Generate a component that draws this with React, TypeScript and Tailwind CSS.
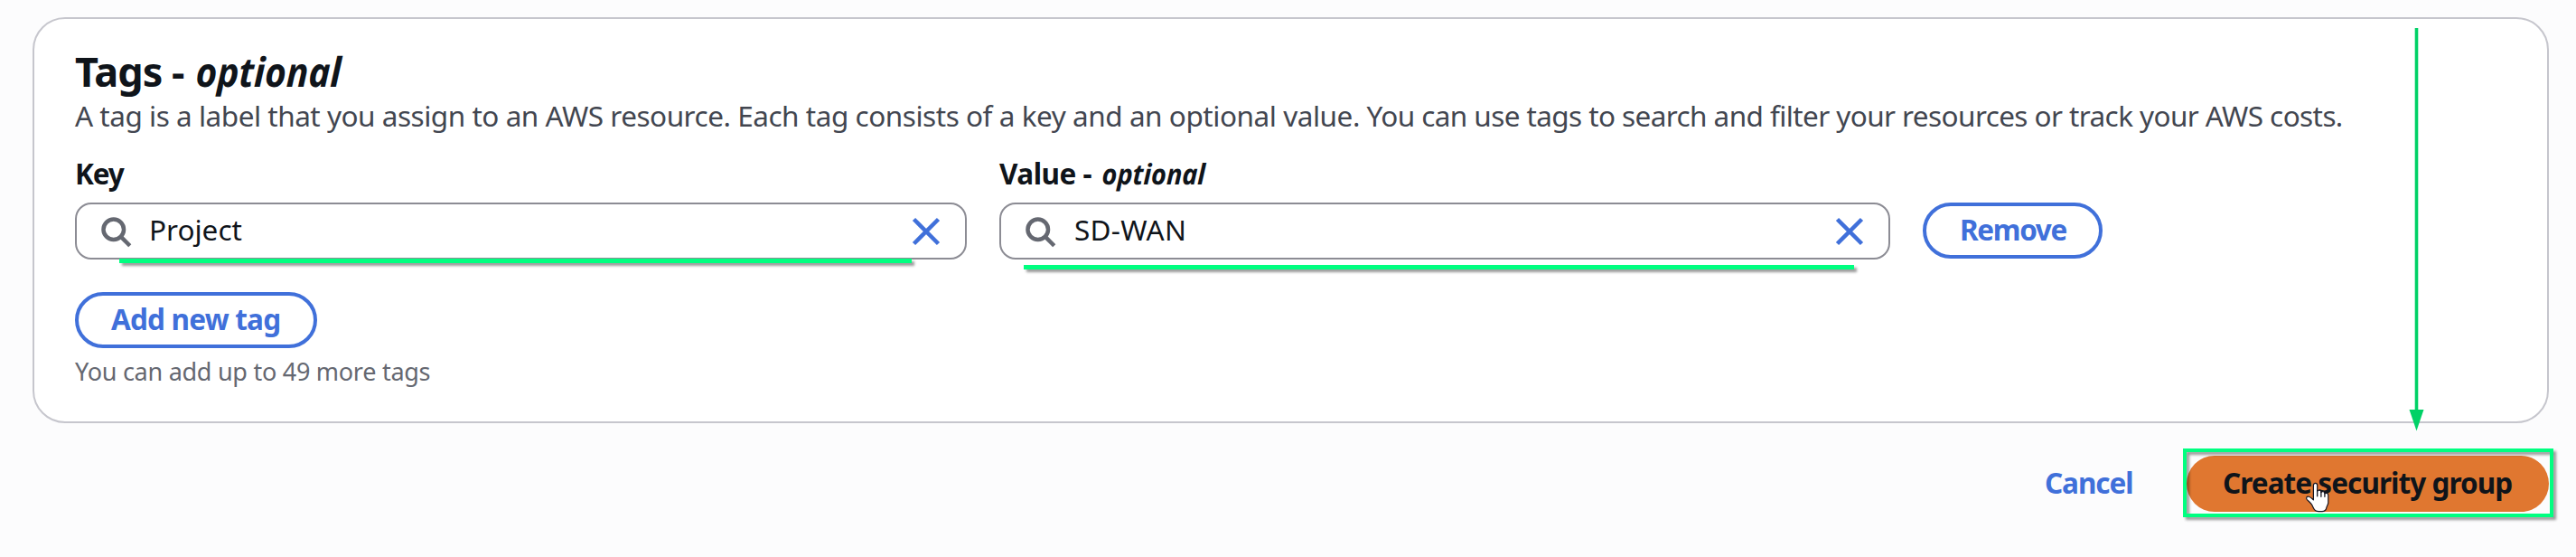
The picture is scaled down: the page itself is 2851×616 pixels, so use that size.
import type { ReactNode } from "react";

function SearchIcon() {
  return (
    <svg viewBox="0 0 16 16" className="h-9 w-9 shrink-0 overflow-visible" fill="none" stroke="#656871" strokeWidth="2">
      <circle cx="7" cy="7" r="5" />
      <path d="m15 15-4.5-4.5" />
    </svg>
  );
}

function CloseIcon() {
  return (
    <svg viewBox="0 0 16 16" className="h-9 w-9 shrink-0 overflow-visible" fill="none" stroke="#4070da" strokeWidth="2">
      <path d="m2 2 12 12M14 2 2 14" />
    </svg>
  );
}

function HandCursor() {
  return (
    <svg viewBox="0 0 44 46" className="absolute left-[2542px] top-[526px] h-[46px] w-[44px]">
      <path
        d="M18.4 10.6c0-3 4.3-3 4.3 0v6.6c.5-1.6 3.9-1.5 4.2.5v.9c.6-1.5 3.6-1.3 4 .6v.8c.8-1.2 3.9-.9 3.9 1.5v8.6c0 2-1.6 3.3-1.9 5.2-.5 2.6-2.3 4.3-5 4.3h-3.7c-2.6 0-4.6-1.3-5.7-3.6l-1.8-3.7c-1-2-3.3-3.7-5.3-5.7-1.9-2-.1-4.3 2.1-3.3 1.9.8 3.3 2.1 4.9 3.5z"
        fill="#fff"
        stroke="#141420"
        strokeWidth="1.2"
        strokeLinejoin="round"
      />
      <path d="M22.7 16.5v6.3M26.9 17.7v5.6M30.9 19v4.3" fill="none" stroke="#141420" strokeWidth="1.3" strokeLinecap="round" />
    </svg>
  );
}

function TagInput({ children }: { children: ReactNode }) {
  return (
    <div className="flex h-[63px] w-full items-center rounded-[18px] border-2 border-[#8c8c94] bg-white pl-[25px] pr-[25px]">
      <SearchIcon />
      <div className="ml-[19px] flex-1 pb-1 text-[31.5px] leading-[45px] text-[#0f141a]">{children}</div>
      <CloseIcon />
    </div>
  );
}

export default function App() {
  return (
    <div className="relative h-[616px] w-[2851px] overflow-hidden bg-[#fcfcfd] pt-[19px] font-['Noto_Sans',sans-serif] text-[#0f141a]">
      <section className="ml-[36px] h-[449px] w-[2785px] rounded-[36px] border-2 border-[#c6c6cd] bg-white pl-[45px] pt-[31px]">
        <h2 className="flex h-[53px] text-[45px] font-bold leading-[54px]">
          <span className="w-[133px] whitespace-nowrap tracking-[-1px]">Tags -</span>
          <em className="origin-bottom-left -skew-x-2 scale-x-[0.9]">optional</em>
        </h2>
        <p className="h-[45px] whitespace-nowrap text-[31.5px] leading-[45px] text-[#424650]">
          <span className="tracking-[-0.48px]">A tag is a label that you assign to an AWS resource. </span>
          <span className="tracking-[-0.46px]">Each tag consists of a key and an optional value. </span>
          <span className="tracking-[-0.59px]">You can use tags to search and filter your resources or track your AWS costs.</span>
        </p>

        <div className="mt-[19px] flex items-end">
          <div className="w-[987px]">
            <div className="mb-[10px] h-[45px] text-[31.5px] font-bold leading-[45px] tracking-[-1.2px]">Key</div>
            <TagInput>Project</TagInput>
          </div>
          <div className="ml-9 w-[986px]">
            <div className="mb-[10px] flex h-[45px] text-[31.5px] font-bold leading-[45px]">
              <span className="w-[113px] whitespace-nowrap tracking-[-0.5px]">Value -</span>
              <em className="origin-bottom-left -skew-x-2 scale-x-[0.915]">optional</em>
            </div>
            <TagInput>
              <span className="pl-px tracking-[0.28px]">SD-WAN</span>
            </TagInput>
          </div>
          <button className="mb-px ml-9 flex h-[62px] w-[199px] items-center rounded-full border-4 border-[#4070da] pb-1 pl-[37px] text-[31.5px] font-bold leading-[45px] tracking-[-1.35px] text-[#4070da]">
            Remove
          </button>
        </div>

        <button className="mt-9 flex h-[62px] w-[268px] items-center whitespace-nowrap rounded-full border-4 border-[#4070da] pb-1 pl-9 text-[31.5px] font-bold leading-[45px] tracking-[-0.8px] text-[#4070da]">
          Add new tag
        </button>
        <p className="mt-2 text-[27px] leading-[36px] tracking-[-0.27px] text-[#656871]">You can add up to 49 more tags</p>
      </section>

      <footer className="mt-9 flex h-[62px] justify-end pr-[30px] text-[31.5px] font-bold leading-[45px]">
        <button className="mr-[59px] w-[98px] whitespace-nowrap pb-1 text-left tracking-[-1.1px] text-[#4070da]">Cancel</button>
        <button className="w-[401px] whitespace-nowrap rounded-full bg-[#e07730] pb-1 pl-10 text-left tracking-[-0.95px]">
          Create security group
        </button>
      </footer>

      <div className="absolute left-[132px] top-[286px] h-[5px] w-[877px] bg-[#00ff80] shadow-[3px_3px_3px_rgba(0,0,0,0.4)]" />
      <div className="absolute left-[1133px] top-[293px] h-[5px] w-[919px] bg-[#00ff80] shadow-[3px_3px_3px_rgba(0,0,0,0.4)]" />
      <svg viewBox="0 0 18 446" className="absolute left-[2666px] top-[31px] h-[446px] w-[18px]">
        <path d="M8.5 0V424" stroke="#00d166" strokeWidth="3.6" />
        <path d="M.5 422H16.5L8.5 445.5Z" fill="#00d166" />
      </svg>
      <div className="absolute left-[2416px] top-[496px] h-[76px] w-[410px] border-4 border-[#00ff80] [filter:drop-shadow(3px_3px_1.5px_rgba(0,0,0,0.4))]" />
      <HandCursor />
    </div>
  );
}
